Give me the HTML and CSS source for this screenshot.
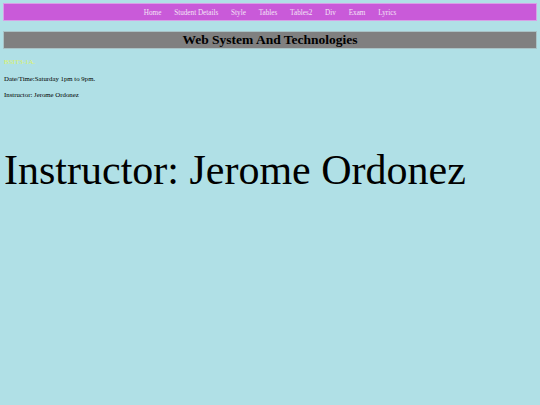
FILE: index.html
```html
<!DOCTYPE html>
<html>
<head>
<meta charset="utf-8">
<link rel="stylesheet" href="styles.css">
</head>
<body>
<nav class="nav">
  <a class="nav-link" href="#">Home</a>
  <a class="nav-link" href="#">Student Details</a>
  <a class="nav-link" href="#">Style</a>
  <a class="nav-link" href="#">Tables</a>
  <a class="nav-link" href="#">Tables2</a>
  <a class="nav-link" href="#">Div</a>
  <a class="nav-link" href="#">Exam</a>
  <a class="nav-link" href="#">Lyrics</a>
</nav>
<h1 class="title">Web System And Technologies</h1>
<p class="section">BSIT3-1A.</p>
<p class="info">Date/Time:Saturday 1pm to 9pm.</p>
<p class="info">Instructor: Jerome Ordonez</p>
<p class="big">Instructor: Jerome Ordonez</p>
</body>
</html>
```
FILE: styles.css
```css
html, body {
  margin: 0;
  padding: 0;
}
body {
  background: #b0e0e6;
  font-family: "Liberation Serif", "Times New Roman", serif;
  padding: 3px;
  color: #000;
}
.nav {
  background: #c95ad9;
  border: 1px solid #d8a0e6;
  height: 16px;
  display: flex;
  justify-content: center;
  align-items: center;
}
.nav-link {
  color: #f3e4f6;
  text-decoration: none;
  font-size: 7.2px;
  padding: 2px 6.4px 0;
}
.title {
  background: #808080;
  border: 1px solid #a9c3c6;
  margin: 10px 0 0 0;
  height: 16px;
  line-height: 16px;
  font-size: 13.5px;
  text-align: center;
  font-weight: bold;
}
.section {
  color: #dcf26a;
  font-size: 7px;
  margin: 9px 0 0 1px;
}
.info {
  font-size: 6.8px;
  margin: 9px 0 0 1px;
}
.big {
  font-size: 42px;
  margin: 48px 0 0 1px;
  line-height: 1.15;
}
```
